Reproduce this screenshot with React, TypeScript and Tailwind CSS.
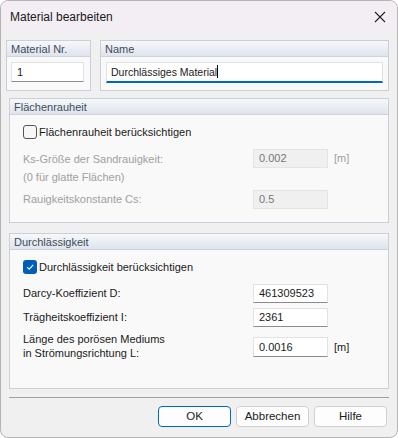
import React from 'react';

const font = { fontFamily: '"Liberation Sans", Arial, sans-serif' };

const Group = ({ title, className, children }: { title: string; className?: string; children: React.ReactNode }) => (
    <div className={`border border-[#c9cfdb] bg-[#f9f9f9] ${className ?? ''}`}>
        <div className="h-[16px] bg-gradient-to-b from-[#f6f8fb] to-[#dfe4ec] border-b border-[#cdd3de] px-[4px] text-[11px] leading-[16px] text-[#3f4b5c]">
            {title}
        </div>
        {children}
    </div>
);

const Field = ({ value, disabled }: { value: string; disabled?: boolean }) => (
    <div
        className={
            disabled
                ? 'h-[19px] w-[75px] border border-[#e4e4e4] bg-[#f0f0f0] px-[5px] text-[11px] leading-[17px] text-[#777]'
                : 'h-[19px] w-[75px] border border-[#e2e2e2] border-b-[#8c8c8c] bg-white px-[5px] text-[11px] leading-[17px] text-[#1a1a1a]'
        }
    >
        {value}
    </div>
);

export default function App() {
    return (
        <div style={font} className="w-[398px] h-[438px] bg-white">
            <div className="w-[398px] h-[438px] rounded-[8px] border border-[#b4b4b4] bg-[#f0f0f0] overflow-hidden flex flex-col">
                {/* title bar */}
                <div className="h-[31px] shrink-0 bg-[#f3eef3] flex items-center justify-between pl-[9px] pr-[11px]">
                    <span className="text-[12px] text-[#1a1a1a]">Material bearbeiten</span>
                    <svg width="12" height="12" viewBox="0 0 12 12" className="text-[#222]">
                        <path d="M1 1 L11 11 M11 1 L1 11" stroke="currentColor" strokeWidth="1.1" fill="none" />
                    </svg>
                </div>

                <div className="flex flex-col px-[8px] pt-[8px]">
                    {/* top row */}
                    <div className="flex gap-[9px] -ml-[3px]">
                        <Group title="Material Nr." className="w-[85px] h-[51px]">
                            <div className="px-[4px] pt-[5px]">
                                <div className="h-[20px] w-[73px] border border-[#e2e2e2] border-b-[#8c8c8c] bg-white px-[5px] text-[11px] leading-[18px] text-[#1a1a1a]">
                                    1
                                </div>
                            </div>
                        </Group>
                        <Group title="Name" className="flex-1 h-[51px]">
                            <div className="px-[5px] pt-[5px]">
                                <div className="h-[21px] border border-[#e2e2e2] border-b-2 border-b-[#0067c0] bg-white px-[4px] text-[10.5px] leading-[18px] text-[#1a1a1a]">
                                    Durchlässiges Material<span className="inline-block w-px h-[13px] bg-black align-[-2px]" />
                                </div>
                            </div>
                        </Group>
                    </div>

                    {/* Flächenrauheit */}
                    <Group title="Flächenrauheit" className="mt-[7px] h-[125px]">
                        <div className="pl-[13px] pt-[9px]">
                            <div className="flex items-center gap-[2px] h-[16px]">
                                <div className="w-[14px] h-[14px] rounded-[3px] border border-[#555] bg-[#f7f7f7]" />
                                <span className="text-[11px] text-[#1a1a1a]">Flächenrauheit berücksichtigen</span>
                            </div>
                            <div className="grid grid-cols-[224px_75px_auto] gap-x-[6px] items-start mt-[9px] text-[11px] text-[#a0a0a0]">
                                <div className="leading-[18px] pt-[1px]">
                                    Ks-Größe der Sandrauigkeit:
                                    <br />
                                    (0 für glatte Flächen)
                                </div>
                                <Field value="0.002" disabled />
                                <div className="leading-[19px]">[m]</div>
                                <div className="leading-[19px] mt-[4px]">Rauigkeitskonstante Cs:</div>
                                <div className="mt-[4px]">
                                    <Field value="0.5" disabled />
                                </div>
                                <div />
                            </div>
                        </div>
                    </Group>

                    {/* Durchlässigkeit */}
                    <Group title="Durchlässigkeit" className="mt-[10px] h-[156px]">
                        <div className="pl-[13px] pt-[9px]">
                            <div className="flex items-center gap-[2px] h-[16px]">
                                <div className="w-[14px] h-[14px] rounded-[3px] bg-[#005fb8] flex items-center justify-center">
                                    <svg width="10" height="10" viewBox="0 0 10 10">
                                        <path d="M2 5.2 L4.2 7.2 L8.2 2.8" stroke="white" strokeWidth="1.1" fill="none" />
                                    </svg>
                                </div>
                                <span className="text-[11px] text-[#1a1a1a]">Durchlässigkeit berücksichtigen</span>
                            </div>
                            <div className="grid grid-cols-[224px_75px_auto] gap-x-[6px] items-center mt-[9px] text-[11px] text-[#1a1a1a]">
                                <div className="leading-[19px]">Darcy-Koeffizient D:</div>
                                <Field value="461309523" />
                                <div />
                                <div className="leading-[19px] mt-[5px]">Trägheitskoeffizient I:</div>
                                <div className="mt-[5px]">
                                    <Field value="2361" />
                                </div>
                                <div />
                                <div className="leading-[14px] mt-[5px]">
                                    Länge des porösen Mediums
                                    <br />
                                    in Strömungsrichtung L:
                                </div>
                                <div className="mt-[7px]">
                                    <div className="h-[20px] w-[75px] border border-[#e2e2e2] border-b-[#8c8c8c] bg-white px-[5px] text-[11px] leading-[18px]">
                                        0.0016
                                    </div>
                                </div>
                                <div className="mt-[7px] leading-[19px]">[m]</div>
                            </div>
                        </div>
                    </Group>

                    <div className="mt-[8px] h-px bg-[#a0a0a0]" />

                    {/* buttons */}
                    <div className="flex justify-end gap-[5px] mt-[8px] pr-[2px] text-[11.5px]">
                        <button className="w-[73px] h-[21px] rounded-[4px] border border-[#0067c0] bg-[#fdfdfd] text-[#1a1a1a] leading-[19px]">
                            OK
                        </button>
                        <button className="w-[73px] h-[21px] rounded-[4px] border border-[#d0d0d0] bg-[#fdfdfd] text-[#1a1a1a] leading-[19px]">
                            Abbrechen
                        </button>
                        <button className="w-[73px] h-[21px] rounded-[4px] border border-[#d0d0d0] bg-[#fdfdfd] text-[#1a1a1a] leading-[19px]">
                            Hilfe
                        </button>
                    </div>
                </div>
            </div>
        </div>
    );
}
